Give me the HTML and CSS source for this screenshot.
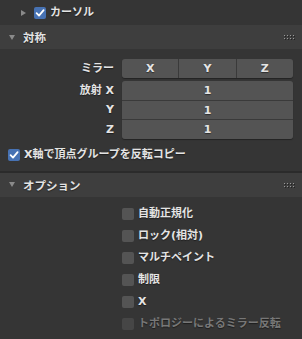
FILE: index.html
```html
<!DOCTYPE html>
<html lang="ja">
<head>
<meta charset="utf-8">
<link rel="stylesheet" href="styles.css">
</head>
<body>
<div class="page">
  <div class="toprow">
    <span class="tri-right"></span>
    <span class="cb checked"><svg viewBox="0 0 12 12"><path d="M2.6 6.2 L5 8.6 L9.6 3.2" fill="none" stroke="#fff" stroke-width="1.8" stroke-linecap="round" stroke-linejoin="round"/></svg></span>
    <span class="txt">カーソル</span>
  </div>

  <div class="phead">
    <span class="tri-down"></span>
    <span class="ptitle">対称</span>
    <span class="grip"><i></i><i></i><i></i><i></i><i></i><i></i><i></i><i></i></span>
  </div>
  <div class="pbody sym">
    <div class="prop">
      <div class="lbl">ミラー</div>
      <div class="seg">
        <div class="btn">X</div>
        <div class="btn">Y</div>
        <div class="btn">Z</div>
      </div>
    </div>
    <div class="prop stack">
      <div class="labels">
        <div class="lbl">放射 X</div>
        <div class="lbl">Y</div>
        <div class="lbl">Z</div>
      </div>
      <div class="fields">
        <div class="fld">1</div>
        <div class="fld">1</div>
        <div class="fld">1</div>
      </div>
    </div>
    <div class="cbrow left">
      <span class="cb checked"><svg viewBox="0 0 12 12"><path d="M2.6 6.2 L5 8.6 L9.6 3.2" fill="none" stroke="#fff" stroke-width="1.8" stroke-linecap="round" stroke-linejoin="round"/></svg></span>
      <span class="txt">X軸で頂点グループを反転コピー</span>
    </div>
  </div>

  <div class="sep"></div>

  <div class="phead">
    <span class="tri-down"></span>
    <span class="ptitle">オプション</span>
    <span class="grip"><i></i><i></i><i></i><i></i><i></i><i></i><i></i><i></i></span>
  </div>
  <div class="pbody opts">
    <div class="cbrow"><span class="cb"></span><span class="txt">自動正規化</span></div>
    <div class="cbrow"><span class="cb"></span><span class="txt">ロック(相対)</span></div>
    <div class="cbrow"><span class="cb"></span><span class="txt">マルチペイント</span></div>
    <div class="cbrow"><span class="cb"></span><span class="txt">制限</span></div>
    <div class="cbrow"><span class="cb"></span><span class="txt">X</span></div>
    <div class="cbrow disabled"><span class="cb"></span><span class="txt">トポロジーによるミラー反転</span></div>
  </div>
</div>
</body>
</html>
```

FILE: styles.css
```css
html, body {
  margin: 0;
  padding: 0;
  background: #353535;
}
.page {
  width: 302px;
  height: 339px;
  overflow: hidden;
  font-family: "DejaVu Sans", "Noto Sans CJK JP", sans-serif;
  font-size: 11px;
  font-weight: bold;
  color: #e4e4e4;
  text-shadow: 0 1px 1px rgba(0,0,0,0.45);
}
.toprow {
  height: 25px;
  display: flex;
  align-items: center;
  padding-left: 21px;
  background: #353535;
}
.tri-right {
  width: 0; height: 0;
  border-top: 3px solid transparent;
  border-bottom: 3px solid transparent;
  border-left: 5px solid #8a8a8a;
  margin-right: 8px;
}
.tri-down {
  width: 0; height: 0;
  border-left: 3px solid transparent;
  border-right: 3px solid transparent;
  border-top: 5px solid #8a8a8a;
  margin-right: 8px;
}
.cb {
  width: 12px;
  height: 12px;
  border-radius: 2px;
  background: #545454;
  flex: none;
  display: inline-flex;
  box-sizing: border-box;
}
.cb.checked { background: #4772b3; }
.cb svg { width: 12px; height: 12px; }
.txt { margin-left: 4px; line-height: 14px; white-space: nowrap; }

.phead {
  height: 24px;
  background: #3e3e3e;
  display: flex;
  align-items: center;
  padding-left: 9px;
  padding-right: 8px;
}
.ptitle { font-size: 11.5px; }
.grip {
  margin-left: auto;
  display: grid;
  grid-template-columns: repeat(4, 1px);
  grid-template-rows: repeat(2, 1px);
  column-gap: 2px;
  row-gap: 2px;
}
.grip i {
  display: block;
  width: 1px; height: 1px;
  background: #9a9a9a;
  box-shadow: 1px 1px 0 #222;
}
.sep { height: 2px; background: #2b2b2b; }

.pbody.sym { padding: 10px 9px 5px 0; }
.prop {
  display: flex;
}
.lbl {
  width: 114px;
  text-align: right;
  flex: none;
  height: 19px;
  line-height: 19px;
  padding-right: 8px;
}
.labels { display: flex; flex-direction: column; }
.labels .lbl { height: 19.33px; line-height: 19.33px; }
.seg {
  flex: 1;
  display: flex;
  height: 19px;
  border-radius: 3px;
  overflow: hidden;
  gap: 1px;
  background: #3a3a3a;
  box-shadow: 0 1px 1px rgba(0,0,0,0.35);
}
.btn {
  flex: 1;
  background: #545454;
  text-align: center;
  line-height: 19px;
}
.stack { margin-top: 3px; }
.fields {
  flex: 1;
  display: flex;
  flex-direction: column;
  border-radius: 3px;
  overflow: hidden;
  gap: 1px;
  background: #3a3a3a;
  box-shadow: 0 1px 1px rgba(0,0,0,0.35);
}
.fld {
  height: 18.66px;
  line-height: 19px;
  background: #545454;
  text-align: center;
}
.cbrow {
  display: flex;
  align-items: center;
  height: 22px;
}
.cbrow.left { margin-top: 5px; padding-left: 8px; height: 22px; }
.pbody.opts { padding: 6px 0 0 122px; }
.cbrow.disabled .cb { background: #464646; }
.cbrow.disabled .txt { color: #777777; }
```
